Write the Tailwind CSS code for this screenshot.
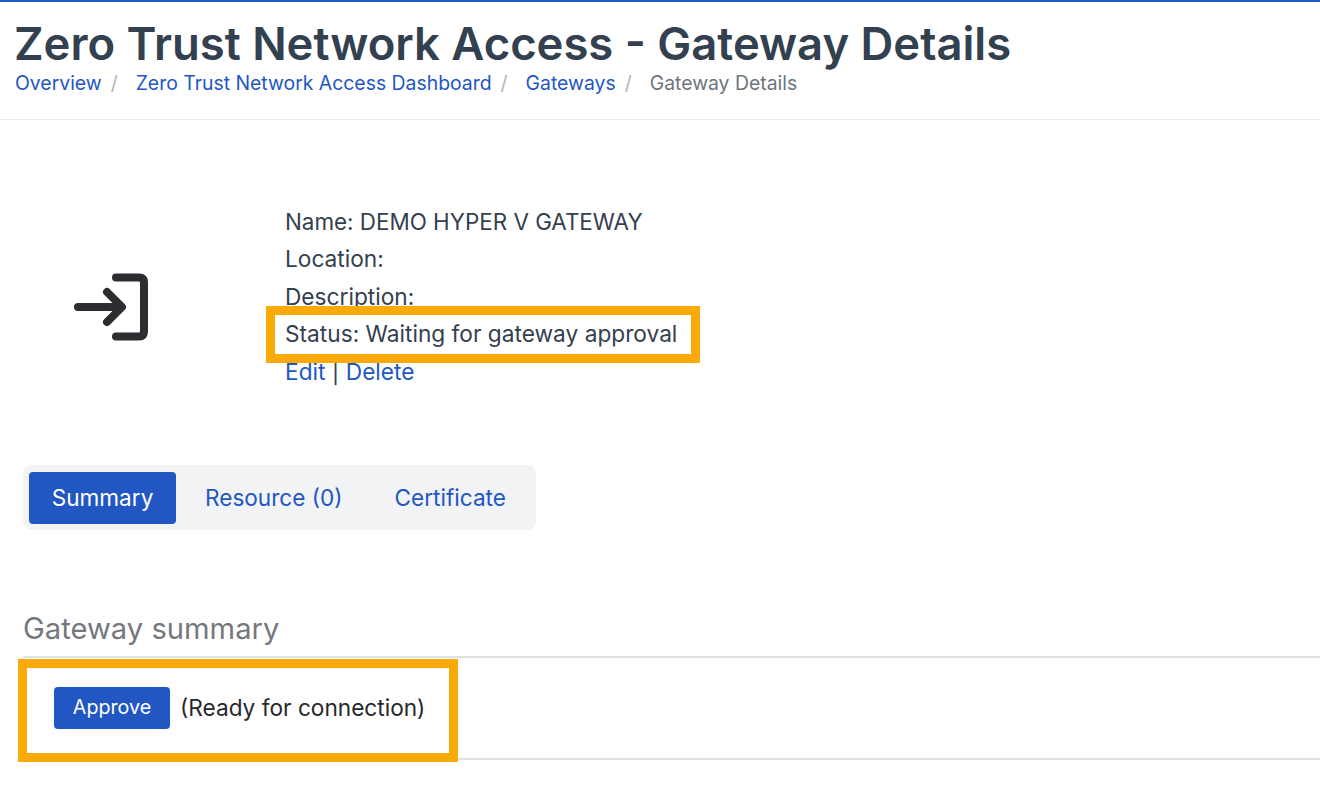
<!doctype html>
<html><head><meta charset="utf-8"><script src="https://cdn.jsdelivr.net/npm/@tailwindcss/browser@4"></script></head>
<body class="bg-white font-['Inter',sans-serif]">
<div class="relative w-[1320px] h-[803px] overflow-hidden border-t-2 border-[#2257c3]">
  <header class="h-[118px] border-b border-[#e9ecef] pl-[14px] pt-[15px]">
    <h1 class="text-[45.4px] leading-[54px] font-semibold text-[#32404f] whitespace-nowrap">Zero Trust Network Access - Gateway Details</h1>
    <nav class="flex text-[19.4px] leading-[24px] pl-[1px] whitespace-nowrap">
      <a class="text-[#2257c3]">Overview</a><span class="text-[#adb5bd] ml-[9px] mr-[18px]">/</span>
      <a class="text-[#2257c3]">Zero Trust Network Access Dashboard</a><span class="text-[#adb5bd] ml-[9px] mr-[18px]">/</span>
      <a class="text-[#2257c3]">Gateways</a><span class="text-[#adb5bd] ml-[9px] mr-[18px]">/</span>
      <span class="text-[#6c757d]">Gateway Details</span>
    </nav>
  </header>
  <section class="flex pt-[83px] h-[345px]">
    <div class="w-[285px] pl-[70px] pt-[66px]">
      <svg width="84" height="74" viewBox="0 0 84 74" fill="none" stroke="#2b2d30" stroke-width="8" stroke-linecap="round" stroke-linejoin="round"><path d="M8 38H51"/><path d="M37 23L52 38L37 53"/><path d="M46 8.5H69Q74 8.5 74 13.5V62.5Q74 67.5 69 67.5H46"/></svg>
    </div>
    <div class="text-[22.7px] leading-[37.4px] text-[#344050] whitespace-nowrap">
      <p class="text-[22.4px]">Name: DEMO HYPER V GATEWAY</p>
      <p>Location:</p>
      <p>Description:</p>
      <p>Status: Waiting for gateway approval</p>
      <p><a class="text-[#2257c3]">Edit</a> | <a class="text-[#2257c3]">Delete</a></p>
    </div>
  </section>
  <div class="ml-[23px] w-[513px] h-[65px] bg-[#f1f3f5] rounded-[8px] pl-[6px] pt-[7px] pb-[6px] flex items-center text-[22.6px] whitespace-nowrap">
    <a class="w-[147px] h-[52px] bg-[#2257c3] text-white rounded-[4px] flex items-center justify-center pb-[1px]">Summary</a>
    <a class="text-[#2257c3] ml-[29px] -mt-[1px]">Resource (0)</a>
    <a class="text-[#2257c3] ml-[52px] -mt-[1px]">Certificate</a>
  </div>
  <h2 class="ml-[23px] mt-[79px] text-[29.2px] leading-[40px] text-[#74787d]">Gateway summary</h2>
  <div class="ml-[23px] mt-[7px] h-[104px] border-y-2 border-[#dee2e6] flex items-center pl-[31px]">
    <a class="w-[116px] h-[42px] bg-[#2257c3] text-white rounded-[4px] flex items-center justify-center text-[19.7px]">Approve</a>
    <span class="ml-[10px] text-[22.65px] text-[#26282b] whitespace-nowrap">(Ready for connection)</span>
  </div>
  <div class="absolute left-[266px] top-[304px] w-[434px] h-[57px] border-[9px] border-[#f9a908]"></div>
  <div class="absolute left-[18px] top-[657px] w-[440px] h-[103px] border-[9px] border-[#f9a908]"></div>
</div>
</body></html>
